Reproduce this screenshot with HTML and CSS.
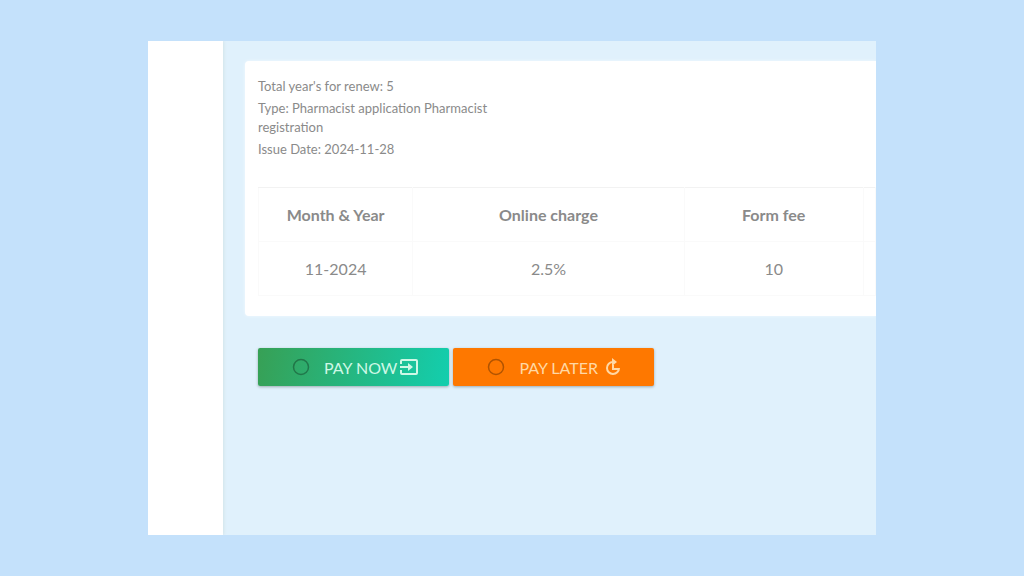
FILE: index.html
```html
<!DOCTYPE html>
<html lang="en">
<head>
<meta charset="utf-8">
<meta name="viewport" content="width=device-width, initial-scale=1">
<title>Renewal payment</title>
<link rel="stylesheet" href="styles.css">
</head>
<body>
<div class="window">
  <aside class="sidebar"></aside>
  <main class="content">
    <section class="card">
      <div class="details">
        <p>Total year's for renew: 5</p>
        <p>Type: Pharmacist application Pharmacist registration</p>
        <p>Issue Date: 2024-11-28</p>
      </div>
      <table class="fees">
        <thead>
          <tr><th class="month">Month &amp; Year</th><th class="charge">Online charge</th><th class="fee">Form fee</th><th></th></tr>
        </thead>
        <tbody>
          <tr><td>11-2024</td><td>2.5%</td><td>10</td><td></td></tr>
        </tbody>
      </table>
    </section>
    <div class="actions">
      <button class="button now" type="button">
        <svg class="ring" viewBox="0 0 18 18" aria-hidden="true"><circle cx="9" cy="9" r="7.5"/></svg>
        <span class="label">PAY NOW<svg class="icon" viewBox="0 0 20 20" aria-hidden="true"><path d="M2 7V4q0-1 1-1h14q1 0 1 1v12q0 1-1 1H3q-1 0-1-1v-3M1 10h10"/><path class="solid" d="M9 6l5 4-5 4z"/></svg></span>
      </button>
      <button class="button later" type="button">
        <svg class="ring" viewBox="0 0 18 18" aria-hidden="true"><circle cx="9" cy="9" r="7.5"/></svg>
        <span class="label">PAY LATER<svg class="icon" viewBox="0 0 20 20" aria-hidden="true"><path d="M10 5a6 6 0 1 0 6 6"/><path d="M10 8v4h5"/><path class="solid" d="M9 1l5 4-5 4z"/></svg></span>
      </button>
    </div>
  </main>
</div>
</body>
</html>
```
FILE: styles.css
```css
* {
  box-sizing: border-box;
}

body {
  margin: 0;
  min-height: 100vh;
  padding: 41px 148px;
  display: flex;
  background: #c4e1fb;
  color: #8a8a8a;
  font-family: Lato, "Open Sans", sans-serif;
}

.window {
  flex: 1;
  display: flex;
  overflow: hidden;
  background: #e0f1fc;
}

.sidebar {
  flex: 0 0 75px;
  background: #fff;
  box-shadow: 1px 0 3px #d3e4e8;
}

.content {
  flex: 1;
  min-width: 0;
  padding: 20px 0 20px 22px;
}

.card {
  padding: 16px 0 20px 13px;
  background: #fff;
  border-radius: 4px 0 0 4px;
  box-shadow: 0 0 3px #f2f9fe;
}

.details {
  max-width: 250px;
  font-size: 13px;
  line-height: 19px;
}

.details p {
  margin: 0 0 3px;
}

.fees {
  width: 100%;
  margin-top: 28px;
  table-layout: fixed;
  border-collapse: collapse;
  text-align: center;
}

.fees th,
.fees td {
  height: 54px;
  padding: 0;
  border: 1px solid #fafafa;
  font-size: 16px;
}

.fees th {
  border-top-color: #f2f2f2;
  font-weight: 700;
}

.month {
  width: 25%;
}

.charge {
  width: 44%;
}

.fee {
  width: 29%;
}

.actions {
  display: flex;
  gap: 4px;
  padding: 32px 0 0 13px;
}

.button {
  display: flex;
  align-items: center;
  gap: 14px;
  height: 38px;
  padding: 0 30px 0 34px;
  border: 0;
  border-radius: 2px;
  box-shadow: 0 1px 3px #9cabb0;
  font-family: inherit;
  font-size: 16px;
}

.now {
  background: linear-gradient(100deg, #37a055, #13ceae);
  color: #cff8e6;
}

.later {
  background: #fe7800;
  color: #ffd8a5;
}

.ring {
  width: 18px;
  height: 18px;
  fill: none;
  stroke: #000;
  stroke-opacity: 0.3;
  stroke-width: 1.5;
}

.label {
  display: flex;
  align-items: center;
  gap: 2px;
}

.later .label {
  gap: 5px;
}

.later .icon {
  margin-right: 1px;
}

.icon {
  width: 20px;
  height: 20px;
  fill: none;
  stroke: currentColor;
  stroke-width: 2;
}

.icon .solid {
  fill: currentColor;
  stroke: none;
}
```
